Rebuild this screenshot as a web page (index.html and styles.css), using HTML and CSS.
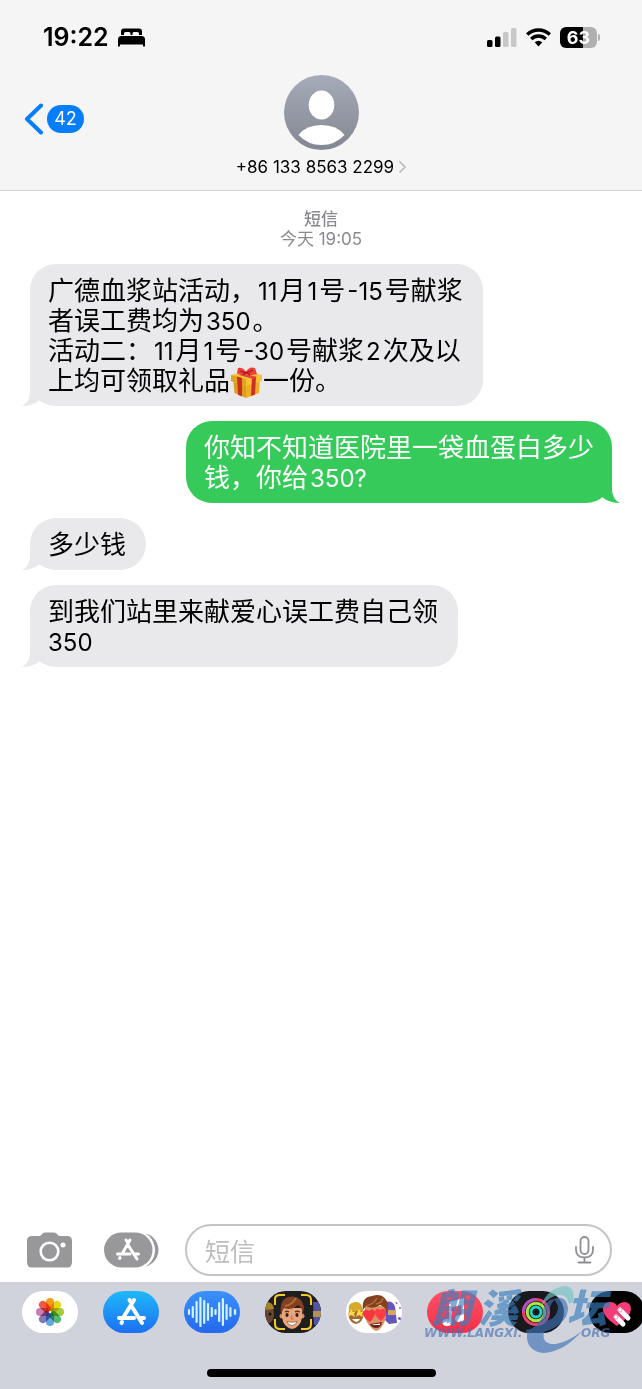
FILE: index.html
```html
<!DOCTYPE html>
<html lang="zh-CN">
<head>
<meta charset="utf-8">
<meta name="viewport" content="width=device-width, initial-scale=1">
<title>短信</title>
<link rel="stylesheet" href="styles.css">
</head>
<body>
<div class="phone">
  <header class="header">
    <div class="status">
      <div class="status-side">
        <time class="clock">19:22</time>
        <svg class="icon-bed" width="27" height="19" viewBox="0 0 27 19"><path d="M3 7V3.500Q3 .5 6 .5H21Q24 .5 24 3.500V7H21V5.500Q21 4 19.500 4H16Q14.500 4 14.500 5.500V7H12.500V5.500Q12.500 4 11 4H7.500Q6 4 6 5.500V7ZM0 18V11.500Q0 8 3.500 8H23.500Q27 8 27 11.500V18Q27 18.500 26.400 18.500H25.600Q25 18.500 25 18V16.500H2V18Q2 18.500 1.400 18.500H.6Q0 18.500 0 18Z"/></svg>
      </div>
      <div class="status-side">
        <svg width="30" height="19" viewBox="0 0 30 19"><rect y="12" width="5.500" height="7" rx="1.500"/><rect x="8" y="8.500" width="5.500" height="10.500" rx="1.500"/><g fill="#c8c8c8"><rect x="16" y="4" width="5.500" height="15" rx="1.500"/><rect x="24" width="5.500" height="19" rx="1.500"/></g></svg>
        <svg width="25" height="19" viewBox="0 0 25 19"><g fill="none" stroke="#000" stroke-width="3.400"><path d="M1.200 6.600Q6.200 2 12.500 2T23.800 6.600"/><path d="M5.200 11Q8.300 8 12.500 8T19.800 11"/></g><path d="M8.700 14.300Q12.500 11.200 16.300 14.300L12.500 18.500Z"/></svg>
        <div class="battery"><span class="battery-level">63</span></div>
      </div>
    </div>
    <nav class="nav">
      <button class="back" aria-label="返回"><svg width="20" height="32" viewBox="0 0 20 32"><path d="M17 2.500L3 16L17 29.500" fill="none" stroke="#067dfd" stroke-width="4" stroke-linecap="round" stroke-linejoin="round"/></svg><span class="unread">42</span></button>
      <button class="contact">
        <svg width="75" height="75" viewBox="0 0 75 75"><defs><linearGradient id="avatar" x2="0" y2="1"><stop stop-color="#a5abb9"/><stop offset="1" stop-color="#838791"/></linearGradient></defs><circle cx="37.500" cy="37.500" r="37.500" fill="url(#avatar)"/><ellipse cx="37.500" cy="30" rx="12.800" ry="14.500" fill="#fff"/><path d="M14.500 60Q22 50 37.500 50T60.500 60Q51 70 37.500 70T14.500 60Z" fill="#fff"/></svg>
        <span class="number">+86 133 8563 2299<svg width="8" height="14" viewBox="0 0 8 14"><path d="M1.500 1.500L7 7L1.500 12.500" fill="none" stroke="#bcbcbe" stroke-width="1.600"/></svg></span>
      </button>
    </nav>
  </header>

  <main class="thread">
    <p class="stamp"><b>短信</b><br>今天 19:05</p>
    <div class="bubble in">广德血浆站活动，<span class="num">11</span>月<span class="num">1</span>号<span class="num">-15</span>号献浆<br>者误工费均为<span class="num">350</span>。<br>活动二：<span class="num">11</span>月<span class="num">1</span>号<span class="num">-30</span>号献浆<span class="num">2</span>次及以<br>上均可领取礼品<svg class="gift" width="31" height="32" viewBox="0 0 31 32"><path d="M2 12L15 17V31L3.500 26Z" fill="#dca01c"/><path d="M15 17L29 12L28 26L15 31Z" fill="#f1ae24"/><path d="M0 8L15 4L31 8V14L15 19L0 14Z" fill="#f8c33b"/><path d="M0 8L15 12V19L0 14Z" fill="#e2a220"/><path d="M6 9.500L11 11V29.500L7 27.700ZM21 10.500L25 9.500L24 27.500L20 29Z" fill="#ca2f26"/><path d="M8 8L22 12L26 10L12 6Z" fill="#e74436"/><path d="M15 7C10 7 7 8 6 6L7 1Q12 0 15 5Q18 -1 24 1L26 7Q20 9 15 7Z" fill="#ec3f39"/><path d="M9 4L15 6L22 3M12 8L15 5L19 8" fill="none" stroke="#a91b22" stroke-width="1.300"/></svg>一份。<svg class="tail" width="22" height="26" viewBox="0 0 22 26"><path d="M8 0V12C8 18 5 24 0 26C7 26 13 24 18 20L22 14L12 0Z"/></svg></div>
    <div class="bubble out">你知不知道医院里一袋血蛋白多少<br>钱，你给<span class="num">350?</span><svg class="tail" width="22" height="26" viewBox="0 0 22 26"><path d="M8 0V12C8 18 5 24 0 26C7 26 13 24 18 20L22 14L12 0Z"/></svg></div>
    <div class="bubble in">多少钱<svg class="tail" width="22" height="26" viewBox="0 0 22 26"><path d="M8 0V12C8 18 5 24 0 26C7 26 13 24 18 20L22 14L12 0Z"/></svg></div>
    <div class="bubble in">到我们站里来献爱心误工费自己领<br><span class="num line-start">350</span><svg class="tail" width="22" height="26" viewBox="0 0 22 26"><path d="M8 0V12C8 18 5 24 0 26C7 26 13 24 18 20L22 14L12 0Z"/></svg></div>
  </main>

  <form class="composer">
    <button type="button" class="tool" aria-label="相机"><svg width="45" height="36" viewBox="0 0 45 36"><path d="M5 4H12Q13.500 4 14.500 2.500Q16 .5 18 .5H27Q29 .5 30.500 2.500Q31.500 4 33 4H40Q45 4 45 9V30Q45 35.500 40 35.500H5Q0 35.500 0 30V9Q0 4 5 4Z" fill="#98989a"/><circle cx="22.500" cy="19.500" r="8.800" fill="none" stroke="#fff" stroke-width="2.600"/><circle cx="36" cy="13" r="2.500" fill="#fff"/></svg></button>
    <button type="button" class="tool" aria-label="应用"><svg width="55" height="36" viewBox="0 0 55 36"><rect x="7" y="1" width="47.500" height="34" rx="17" fill="#98989a"/><rect x="-2" y="-1.500" width="53" height="39" rx="19.500" fill="#fff"/><rect y=".5" width="48.500" height="35" rx="17.500" fill="#98989a"/><g fill="none" stroke="#fff" stroke-width="3" stroke-linecap="round"><path d="M22 8L24 11M26 8L18 22M24 13L33 27M13.500 22H26M31 22H34.500M16 25.500L15.500 26.500"/></g></svg></button>
    <div class="field">
      <input type="text" placeholder="短信" aria-label="短信">
      <button type="button" aria-label="听写"><svg width="19" height="28" viewBox="0 0 19 28"><g fill="none" stroke="#8e8e93" stroke-width="1.800" stroke-linecap="round"><rect x="5.500" y="1" width="8" height="17" rx="4"/><path d="M1 11V13.500Q1 21.500 9.500 21.500T18 13.500V11M9.500 22V26.500M3.500 26.500H15.500"/></g></svg></button>
    </div>
  </form>

  <footer class="drawer">
    <div class="apps">
      <button class="app photos" aria-label="照片"><svg width="56" height="42" viewBox="-28 -21 56 42"><g class="petals"><rect x="-4" y="-14" width="8" height="13" rx="4" fill="#f99b1c"/><rect x="-4" y="-14" width="8" height="13" rx="4" fill="#e8d818" transform="rotate(45)"/><rect x="-4" y="-14" width="8" height="13" rx="4" fill="#a5ca3c" transform="rotate(90)"/><rect x="-4" y="-14" width="8" height="13" rx="4" fill="#56b878" transform="rotate(135)"/><rect x="-4" y="-14" width="8" height="13" rx="4" fill="#64a9dd" transform="rotate(180)"/><rect x="-4" y="-14" width="8" height="13" rx="4" fill="#8478ba" transform="rotate(225)"/><rect x="-4" y="-14" width="8" height="13" rx="4" fill="#cc7eb1" transform="rotate(270)"/><rect x="-4" y="-14" width="8" height="13" rx="4" fill="#ef5945" transform="rotate(315)"/></g></svg></button>
      <button class="app store" aria-label="App Store"><svg width="56" height="42" viewBox="0 0 56 42"><g fill="none" stroke="#fff" stroke-width="4" stroke-linecap="round"><path d="M26.500 9L28.500 12M31 9L20 27M28.500 15L39 32M16 27H31M36.500 27H41M19 31L18.500 32"/></g></svg></button>
      <button class="app audio" aria-label="音频"><svg width="56" height="42" viewBox="0 0 56 42"><path d="M5 19V23M8.800 16V26M12.600 11V31M16.400 7V35M20.200 10V32M24 13V29M27.800 17V25M31.500 19V23M35.200 12V30M38.900 8V34M42.600 14V28M46.400 17V25M51 19V23" stroke="#d3f3ff" stroke-width="2.200" stroke-linecap="round"/></svg></button>
      <button class="app memoji" aria-label="拟我表情"><svg width="56" height="42" viewBox="0 0 56 42"><ellipse cx="4" cy="23" rx="5" ry="9" fill="#674633"/><path d="M0 11Q8 10 9 18L0 19Z" fill="#a58429"/><circle cx="5" cy="23" r="1.500" fill="#17120f"/><path d="M48 11H56V34H49Z" fill="#5552a0"/><path d="M48 20H56V26H48Z" fill="#b4914f"/><g fill="none" stroke="#f7cb25" stroke-width="2"><path d="M10 14V8Q10 4 15 4H20M36 4H41Q46 4 46 9V14M10 28V33Q10 38 15 38H20M36 38H41Q46 38 46 33V28"/></g><circle cx="17" cy="25" r="2.500" fill="#d98f66"/><circle cx="37" cy="25" r="2.500" fill="#d98f66"/><path d="M17 17H37V26Q36 36 27 38Q18 36 17 26Z" fill="#e8a57c"/><path d="M16 24Q14 9 23 6Q36 3 39 16L38 24Q37 16 33 14Q26 20 19 17Q17 20 16 24Z" fill="#83411f"/><path d="M20 15Q27 14 31 7" fill="none" stroke="#b16b3d" stroke-width="2"/><path d="M20 21Q22 19.500 24 21M30 21Q32 19.500 35 21" fill="none" stroke="#60371f" stroke-width="1.300"/><ellipse cx="22" cy="24" rx="1.600" ry="1.900" fill="#34201a"/><ellipse cx="32" cy="24" rx="1.600" ry="1.900" fill="#34201a"/><path d="M27 24L26 28H28.500" fill="none" stroke="#bd714c"/><path d="M22 30.500Q27 32 32 30.500Q31 34.500 27 34.500T22 30.500Z" fill="#fff" stroke="#8b4b38" stroke-width=".7"/></svg></button>
      <button class="app stickers" aria-label="贴纸"><svg width="56" height="42" viewBox="0 0 56 42"><ellipse cx="10" cy="23" rx="7.500" ry="10" fill="#a26b35"/><path d="M3 20Q1 12 9 11Q16 10 17 20Z" fill="#d7a92b"/><path d="M5 18L7 21L10 20L8 23L9 26L5 24L2 26L3 22ZM13 18L15 21L18 20L16 23L17 26L13 24L10 26L11 22Z" fill="#ffd745"/><path d="M6 28H14Q11 34 6 28" fill="#fff"/><path d="M39 11Q47 9 49 16L51 32L43 33L38 28Z" fill="#6654bf"/><path d="M42 19H50V24H42Z" fill="#d5a75d"/><path d="M50 11L51 13M53 17H55M52 28Q54 25 55 29" stroke="#8b65d2" stroke-width="1.500"/><path d="M19 15H40V27Q36 39 30 40Q23 37 19 27Z" fill="#dc9265"/><path d="M17 19Q15 6 26 5Q38 1 42 13L41 22Q39 15 34 14Q27 19 20 15Z" fill="#83411f"/><path d="M20 15Q28 13 31 7M30 13Q36 12 37 7" fill="none" stroke="#b16b3d" stroke-width="1.500"/><path d="M24 31Q16 26 17 21Q19 17 23 20Q27 16 29 21Q29 26 24 31Z" fill="#f3353f"/><path d="M35 30Q28 25 29 20Q31 16 34 19Q38 16 40 20Q41 25 35 30Z" fill="#ff3c44"/><path d="M24 33Q30 32 36 31Q35 37 30 37Q26 37 24 33Z" fill="#6c211e"/><path d="M26 33.500L34 32.500V34H27Z" fill="#fff"/></svg></button>
      <button class="app music" aria-label="音乐"><svg width="56" height="42" viewBox="0 0 56 42"><g fill="#fff"><path d="M22 11L37 7V27H34.500V14L24.500 16.500V31H22Z"/><ellipse cx="20" cy="31.500" rx="4.500" ry="3.500"/><ellipse cx="32.500" cy="27.500" rx="4.500" ry="3.500"/></g></svg></button>
      <button class="app rings" aria-label="健身"><svg width="56" height="42" viewBox="0 0 56 42"><g fill="none" stroke-width="3"><circle cx="28" cy="21" r="12.500" stroke="#ed3d70"/><path d="M15.500 21A12.500 12.500 0 0 1 28 8.500" stroke="#ad4dca"/><circle cx="28" cy="21" r="8.800" stroke="#a9e640"/><circle cx="28" cy="21" r="5" stroke="#25d4c8"/></g></svg></button>
      <button class="app touch" aria-label="心跳"><svg width="56" height="42" viewBox="0 0 56 42"><path d="M28 35Q13 25 14 17Q15 11 21 11Q26 11 28 15Q31 11 36 11Q42 12 42 18Q42 25 28 35Z" fill="#f43c79"/><path d="M27 26L34 33M31 19L39 27" stroke="#fff" stroke-width="5" stroke-linecap="round"/><g fill="none" stroke="#e39ab6"><circle cx="27" cy="26" r="2"/><circle cx="31" cy="19" r="2"/></g></svg></button>
    </div>
    <div class="home"></div>
    <svg class="watermark" width="200" height="76" viewBox="0 0 200 76" aria-hidden="true">
      <g class="mark-title"><text x="10" y="41">朗</text><text x="56" y="41">溪</text><text x="145" y="41">坛</text></g>
      <g class="mark-url"><text x="2" y="55">WWW.LANGXI.</text><text x="159" y="55">ORG</text></g>
      <path d="M119 24Q126 5 144 4Q154 6 151 20L147 22Q145 12 137 13Q128 14 119 24Z" fill="#71c5c5"/>
      <path d="M132 17Q144 12 146 26Q146 42 122 50Q119 63 134 62Q146 60 160 49Q142 70 121 71Q104 69 105 52L104 48Q115 47 121 34L124 39Q136 36 136 24Q134 20 132 17Z" fill="#3f73b8"/>
      <path d="M121 35Q119 24 128 18L133 17Q126 24 126 38L121 46Z" fill="#3f73b8"/>
    </svg>
  </footer>
</div>
</body>
</html>
```
FILE: styles.css
```css
* { box-sizing: border-box; }
body {
  margin: 0;
  background: #fff;
  color: #000;
  font-family: Inter, "Noto Sans CJK SC", sans-serif;
}
button {
  padding: 0;
  border: 0;
  background: none;
  color: inherit;
  font: inherit;
}
svg { display: block; flex: none; }
.phone {
  display: flex;
  flex-direction: column;
  min-height: 100vh;
  overflow: hidden;
}

.header {
  background: #f5f5f5;
  border-bottom: 1px solid #d5d5d6;
}
.status {
  display: flex;
  justify-content: space-between;
  align-items: center;
  height: 74px;
  padding: 0 45px 0 43px;
}
.status-side { display: flex; align-items: center; gap: 9px; }
.clock { font-size: 25px; font-weight: 600; line-height: 30px; }
.battery {
  position: relative;
  width: 37px;
  height: 21px;
  border-radius: 6px;
  background: linear-gradient(90deg, #000 63%, #b0b0b0 63%);
  color: #fff;
  font-size: 18px;
  font-weight: 700;
  line-height: 21px;
  text-align: center;
}
.battery::after {
  content: "";
  position: absolute;
  left: 38px;
  top: 7px;
  width: 2px;
  height: 7px;
  border-radius: 0 2px 2px 0;
  background: #b0b0b0;
}
.nav {
  display: grid;
  grid-template-columns: 1fr auto 1fr;
  align-items: start;
  padding: 1px 24px 12px;
}
.back {
  display: flex;
  align-items: center;
  justify-self: start;
  gap: 3px;
  margin-top: 28px;
}
.unread {
  min-width: 37px;
  border-radius: 14px;
  background: #067dfd;
  color: #fff;
  font-size: 18px;
  line-height: 28px;
}
.contact {
  display: flex;
  flex-direction: column;
  align-items: center;
  gap: 6px;
}
.number {
  display: flex;
  align-items: center;
  gap: 4px;
  font-size: 17px;
  line-height: 22px;
}

.thread {
  display: flex;
  flex: 1;
  flex-direction: column;
  align-items: flex-start;
  gap: 15px;
  padding: 18px 30px;
}
.stamp {
  align-self: center;
  margin: 0;
  color: #8a8a8e;
  font-size: 17px;
  line-height: 20px;
  text-align: center;
}
.stamp b { font-weight: 500; }
.bubble {
  position: relative;
  padding: 10px 20px 12px 18px;
  border-radius: 26px;
  font-family: "Noto Sans CJK SC", sans-serif;
  font-size: 26px;
  line-height: 30px;
  white-space: nowrap;
}
.in { background: #e9e9eb; }
.out {
  align-self: flex-end;
  padding-right: 18px;
  background: #36ca5b;
  color: #fff;
}
.num {
  margin: 0 2px;
  font-family: Inter, sans-serif;
  font-size: 24px;
  line-height: 1;
}
.line-start { margin-left: 0; }
.gift { display: inline-block; vertical-align: middle; margin: -6px 1px; }
.tail { position: absolute; left: -8px; bottom: 0; fill: #e9e9eb; }
.out .tail { left: auto; right: -8px; fill: #36ca5b; transform: scaleX(-1); }

.composer {
  display: flex;
  align-items: center;
  padding: 0 30px 6px 27px;
}
.tool { margin-right: 32px; }
.tool + .tool { margin-right: 26px; }
.field {
  display: flex;
  flex: 1;
  align-items: center;
  min-width: 0;
  height: 52px;
  padding: 0 16px 0 18px;
  border: 2px solid #c4c4c6;
  border-radius: 26px;
}
.field input {
  flex: 1;
  min-width: 0;
  padding: 0;
  border: 0;
  outline: 0;
  background: none;
  font: 25px/30px "Noto Sans CJK SC", sans-serif;
}
.field input::placeholder { color: #bdbdbf; opacity: 1; }

.drawer {
  position: relative;
  padding: 9px 0 12px;
  background: #d0d3db;
}
.apps {
  display: flex;
  gap: 25px;
  padding-left: 22px;
  overflow: hidden;
}
.app {
  flex: none;
  width: 56px;
  height: 42px;
  border-radius: 21px;
  overflow: hidden;
}
.photos, .stickers { background: #fff; }
.petals rect { mix-blend-mode: multiply; }
.store { background: linear-gradient(#1eb9fa, #1d6ff1); }
.audio { background: linear-gradient(#3a91fb, #2468ed); }
.memoji { background: #1e1e1f; }
.music { background: linear-gradient(#fb5467, #f72d48); }
.rings { background: #17191c; }
.touch { background: #000; }
.home {
  width: 229px;
  height: 8px;
  margin: 36px auto 0;
  border-radius: 4px;
  background: #000;
}
.watermark {
  position: absolute;
  top: 0;
  right: 20px;
  overflow: visible;
  opacity: .65;
  pointer-events: none;
}
.mark-title {
  fill: #397fc0;
  font: italic 900 40px "Noto Sans CJK SC", sans-serif;
}
.mark-url {
  fill: #4871b2;
  font: italic 700 12px "DejaVu Sans", sans-serif;
}
```
